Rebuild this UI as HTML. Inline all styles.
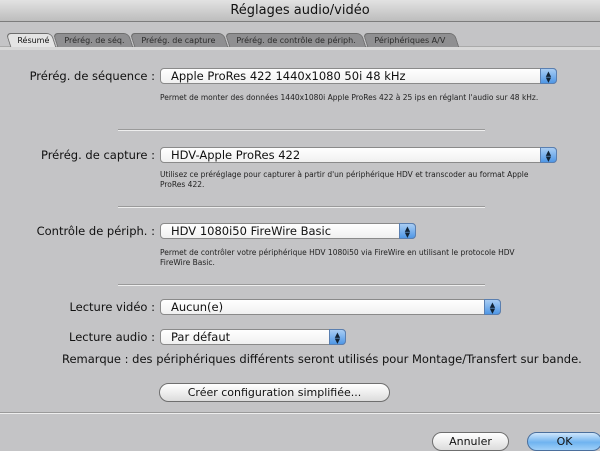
<!DOCTYPE html>
<html><head><meta charset="utf-8"><style>
*{margin:0;padding:0;box-sizing:border-box}
body{width:600px;height:450px;overflow:hidden;background:#c4c4c6;font-family:"Lucida Grande","DejaVu Sans","Liberation Sans",sans-serif;position:relative;color:#111}
.a{position:absolute;white-space:nowrap}
.title{left:0;top:0;width:600px;height:22px;background:linear-gradient(#e2e2e2,#bdbdbd);border-bottom:1px solid #7c7c7c;text-align:center;font-size:13px;line-height:22px}
.tab{position:absolute;top:33px;height:14px;background:#8f8f91;font-size:8px;line-height:14px;padding-left:8px;color:#2a2a2a;border-radius:5px 5px 0 0;border:1px solid #6e6e6e;border-bottom:none;transform:skewX(18deg)}
.tab span{display:inline-block;transform:skewX(-18deg)}
.tab.sel{background:#e4e4e4;color:#111;z-index:2}
.lab{font-size:11.5px;text-align:right}
.pop{position:absolute;height:16px;border:1px solid #8a8a8a;border-radius:4px;background:linear-gradient(#fff,#f0f0f0);font-size:11.5px;line-height:14px;padding-left:10px}
.pop i{position:absolute;right:-1px;top:-1px;width:17px;height:16px;border-radius:0 4px 4px 0;background:linear-gradient(#a9cdf3,#4f97e6);border:1px solid #5a7fb0;font-style:normal;color:#123;font-size:7px;line-height:6px;text-align:center;padding-top:2px}
.desc{font-size:7.5px;color:#222;line-height:10px}
.sep{position:absolute;height:2px;border-top:1px solid #9a9a9a;border-bottom:1px solid #eee}
.btn{position:absolute;height:19px;border:1px solid #6f6f6f;border-radius:10px;background:linear-gradient(#fff,#dcdcdc);font-size:11px;text-align:center;line-height:17px}
</style></head><body>
<div class="a title">Réglages audio/vidéo</div>
<div class="a" style="left:0;top:46px;width:600px;height:4px;background:#d8d8d8;border-top:1px solid #aaa"></div>
<div class="tab sel" style="left:8px;width:46px"><span>Résumé</span></div>
<div class="tab" style="left:55px;width:76px"><span>Prérég. de séq.</span></div>
<div class="tab" style="left:132px;width:94px"><span>Prérég. de capture</span></div>
<div class="tab" style="left:227px;width:137px"><span>Prérég. de contrôle de périph.</span></div>
<div class="tab" style="left:365px;width:92px"><span>Périphériques A/V</span></div>

<div class="a lab" style="right:445px;top:69px">Prérég. de séquence :</div>
<div class="pop" style="left:160px;top:68px;width:397px">Apple ProRes 422 1440x1080 50i 48 kHz<i>▲<br>▼</i></div>
<div class="a desc" style="left:160px;top:93px">Permet de monter des données 1440x1080i Apple ProRes 422 à 25 ips en réglant l'audio sur 48 kHz.</div>
<div class="sep" style="left:118px;top:129px;width:367px"></div>

<div class="a lab" style="right:445px;top:148px">Prérég. de capture :</div>
<div class="pop" style="left:160px;top:147px;width:397px">HDV-Apple ProRes 422<i>▲<br>▼</i></div>
<div class="a desc" style="left:160px;top:170px">Utilisez ce préréglage pour capturer à partir d'un périphérique HDV et transcoder au format Apple<br>ProRes 422.</div>
<div class="sep" style="left:118px;top:206px;width:367px"></div>

<div class="a lab" style="right:445px;top:224px">Contrôle de périph. :</div>
<div class="pop" style="left:160px;top:223px;width:256px">HDV 1080i50 FireWire Basic<i>▲<br>▼</i></div>
<div class="a desc" style="left:160px;top:248px">Permet de contrôler votre périphérique HDV 1080i50 via FireWire en utilisant le protocole HDV<br>FireWire Basic.</div>
<div class="sep" style="left:118px;top:284px;width:367px"></div>

<div class="a lab" style="right:445px;top:300px">Lecture vidéo :</div>
<div class="pop" style="left:160px;top:299px;width:341px">Aucun(e)<i>▲<br>▼</i></div>
<div class="a lab" style="right:445px;top:330px">Lecture audio :</div>
<div class="pop" style="left:160px;top:329px;width:186px">Par défaut<i>▲<br>▼</i></div>
<div class="a" style="left:62px;top:352px;font-size:11.5px">Remarque : des périphériques différents seront utilisés pour Montage/Transfert sur bande.</div>

<div class="btn" style="left:159px;top:383px;width:231px">Créer configuration simplifiée...</div>
<div class="sep" style="left:0;top:412px;width:600px"></div>
<div class="btn" style="left:432px;top:432px;width:77px">Annuler</div>
<div class="btn" style="left:527px;top:432px;width:75px;background:linear-gradient(#cfe6fb,#6fb3f0 55%,#9fd0f8);border-color:#4b6f9c">OK</div>
</body></html>
